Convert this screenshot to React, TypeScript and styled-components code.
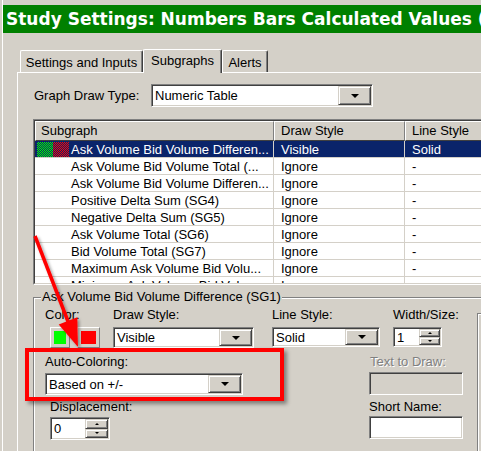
import React from "react";
import styled, { createGlobalStyle } from "styled-components";

const GlobalStyle = createGlobalStyle`
  html, body { margin: 0; padding: 0; background: #d4d0c8; }
  body {
    font-family: "Liberation Sans", Arial, sans-serif;
    font-size: 13px;
    color: #000;
  }
`;

const Screen = styled.div`
  position: relative;
  width: 481px;
  height: 451px;
  overflow: hidden;
  background: #d4d0c8;
`;

const Window = styled.div`
  box-sizing: border-box;
  width: 640px;
  height: 100%;
  margin-left: 2px;
  padding-top: 5px;
  border-left: 1px solid #fff;
`;

const TitleBar = styled.div`
  height: 28px;
  background: #008000;
  color: #fff;
  font-family: "DejaVu Sans", Verdana, sans-serif;
  font-weight: bold;
  font-size: 17px;
  line-height: 28px;
  padding-left: 3px;
  white-space: nowrap;
  overflow: hidden;
`;

const TabRow = styled.div`
  display: flex;
  align-items: flex-end;
  height: 24px;
  margin-top: 15px;
  margin-left: 17px;
`;

const Tab = styled.div<{ $active?: boolean; $w: number }>`
  position: relative;
  z-index: ${(p) => (p.$active ? 1 : 0)};
  box-sizing: border-box;
  width: ${(p) => p.$w}px;
  height: ${(p) => (p.$active ? 24 : 22)}px;
  margin-bottom: ${(p) => (p.$active ? -1 : 0)}px;
  padding-top: ${(p) => (p.$active ? 1 : 2)}px;
  line-height: 20px;
  text-align: center;
  white-space: nowrap;
  background: #d4d0c8;
  border-top: 1px solid #fff;
  border-left: 1px solid #fff;
  border-right: 1px solid #404040;
  box-shadow: inset -1px 0 #808080;
  border-top-left-radius: 2px;
  border-top-right-radius: 2px;
`;

const Panel = styled.div`
  margin-left: 14px;
  height: 400px;
  border-left: 1px solid #fff;
  border-top: 1px solid #fff;
  padding-left: 15px;
  padding-top: 11px;
`;

const DrawTypeRow = styled.div`
  display: flex;
  align-items: center;
  height: 23px;
`;

const RowLabel = styled.div<{ $w: number }>`
  width: ${(p) => p.$w}px;
  padding-left: 1px;
  box-sizing: border-box;
  white-space: nowrap;
`;

const Sunken = styled.div<{ $w: number; $h: number; $disabled?: boolean }>`
  box-sizing: border-box;
  display: flex;
  flex: none;
  width: ${(p) => p.$w}px;
  height: ${(p) => p.$h}px;
  padding: 1px;
  border: 1px solid;
  border-color: #808080 #fff #fff #808080;
  box-shadow: inset 1px 1px #404040, inset -1px -1px #d4d0c8;
  background: ${(p) => (p.$disabled ? "#d4d0c8" : "#fff")};
`;

const FieldText = styled.div`
  flex: 1;
  min-width: 0;
  display: flex;
  align-items: center;
  padding-left: 2px;
  white-space: nowrap;
  overflow: hidden;
`;

const RaisedButton = styled.div<{ $w: number }>`
  box-sizing: border-box;
  width: ${(p) => p.$w}px;
  flex: none;
  display: flex;
  align-items: center;
  justify-content: center;
  background: #d4d0c8;
  border: 1px solid;
  border-color: #d4d0c8 #404040 #404040 #d4d0c8;
  box-shadow: inset 1px 1px #fff, inset -1px -1px #808080;
`;

const DownArrow = styled.span`
  width: 0;
  height: 0;
  border-left: 4px solid transparent;
  border-right: 4px solid transparent;
  border-top: 4px solid #000;
`;

const SpinColumn = styled.div`
  display: flex;
  flex-direction: column;
  flex: none;
`;

const SpinButton = styled(RaisedButton)`
  flex: 1;
`;

const TinyArrow = styled.span<{ $up?: boolean }>`
  width: 0;
  height: 0;
  border-left: 2px solid transparent;
  border-right: 2px solid transparent;
  ${(p) => (p.$up ? "border-bottom: 2px solid #000;" : "border-top: 2px solid #000;")}
`;

const TableOuter = styled.div`
  margin-top: 12px;
  width: 600px;
  border: 1px solid;
  border-color: #808080 #fff #fff #808080;
`;

const TableInner = styled.div`
  height: 162px;
  overflow: hidden;
  border: 1px solid;
  border-color: #404040 #d4d0c8 #d4d0c8 #404040;
  background: #fff;
`;

const GridRow = styled.div`
  display: grid;
  grid-template-columns: 239px 131px 1fr;
`;

const HeaderCell = styled.div<{ $pl: number }>`
  box-sizing: border-box;
  height: 20px;
  line-height: 18px;
  padding-left: ${(p) => p.$pl}px;
  background: #d4d0c8;
  border-top: 1px solid #fff;
  border-left: 1px solid #fff;
  border-right: 1px solid #808080;
  border-bottom: 1px solid #404040;
  white-space: nowrap;
`;

const DataRow = styled(GridRow)<{ $selected?: boolean }>`
  background: ${(p) => (p.$selected ? "#0a246a" : "#fff")};
  color: ${(p) => (p.$selected ? "#fff" : "#000")};
`;

const Cell = styled.div<{ $pl: number }>`
  box-sizing: border-box;
  display: flex;
  align-items: center;
  height: 17px;
  padding-left: ${(p) => p.$pl}px;
  border-right: 1px solid #d4d0c8;
  border-bottom: 1px solid #d4d0c8;
  white-space: nowrap;
  overflow: hidden;
`;

const Swatches = styled.div`
  display: flex;
  width: 32px;
  height: 15px;
  margin-right: 2px;
  flex: none;
`;

const Swatch = styled.div<{ $color: string }>`
  flex: 1;
  background-image: repeating-conic-gradient(${(p) => p.$color} 0 25%, #0a246a 0 50%);
  background-size: 2px 2px;
`;

const GroupBox = styled.div`
  position: relative;
  margin-top: 12px;
  height: 300px;
  border: 1px solid #808080;
  box-shadow: inset 1px 1px #fff, 1px 1px #fff;
  padding-left: 11px;
  padding-top: 9px;
  display: flex;
`;

const Legend = styled.div`
  position: absolute;
  top: -9px;
  left: 7px;
  height: 16px;
  line-height: 16px;
  padding: 0 1px;
  background: #d4d0c8;
  white-space: nowrap;
`;

const MainColumn = styled.div`
  width: 432px;
  flex: none;
  display: flex;
  flex-direction: column;
`;

const SideFrame = styled.div`
  margin-top: 6px;
  width: 40px;
  height: 200px;
  border: 1px solid #808080;
  box-shadow: inset 1px 1px #fff;
`;

const FieldRow = styled.div<{ $mt?: number }>`
  display: flex;
  align-items: flex-start;
  margin-top: ${(p) => p.$mt ?? 0}px;
`;

const Field = styled.div<{ $w?: number; $ml?: number; $mt?: number }>`
  display: flex;
  flex-direction: column;
  flex: none;
  ${(p) => (p.$w ? `width: ${p.$w}px;` : "")}
  margin-left: ${(p) => p.$ml ?? 0}px;
  margin-top: ${(p) => p.$mt ?? 0}px;
`;

const Label = styled.div<{ $mb?: number; $disabled?: boolean; $pl?: number }>`
  height: 16px;
  line-height: 16px;
  white-space: nowrap;
  margin-bottom: ${(p) => p.$mb ?? 4}px;
  padding-left: ${(p) => p.$pl ?? 0}px;
  color: ${(p) => (p.$disabled ? "#808080" : "#000")};
  text-shadow: ${(p) => (p.$disabled ? "1px 1px 0 #fff" : "none")};
`;

const ColorButtons = styled.div`
  display: flex;
  gap: 7px;
  margin-left: 5px;
`;

const ColorButton = styled.div<{ $w: number }>`
  box-sizing: border-box;
  width: ${(p) => p.$w}px;
  height: 21px;
  padding: 3px;
  background: #d4d0c8;
  border: 1px solid;
  border-color: #fff #808080 #808080 #fff;
`;

const ColorFill = styled.div<{ $color: string }>`
  width: 100%;
  height: 100%;
  background: ${(p) => p.$color};
`;

const Overlay = styled.svg`
  position: absolute;
  left: 0;
  top: 0;
  width: 481px;
  height: 451px;
  pointer-events: none;
`;

const Highlight = styled.div`
  position: absolute;
  left: 25px;
  top: 348px;
  width: 259px;
  height: 53px;
  box-sizing: border-box;
  border: 4px solid #ff0000;
  box-shadow: 3px 3px 4px rgba(0, 0, 0, 0.4);
  pointer-events: none;
`;

type ComboProps = { w: number; h: number; value: string };
const Combo = ({ w, h, value }: ComboProps) => (
  <Sunken $w={w} $h={h}>
    <FieldText>{value}</FieldText>
    <RaisedButton $w={33}>
      <DownArrow />
    </RaisedButton>
  </Sunken>
);

type SpinProps = { w: number; h: number; value: string; bw: number };
const Spin = ({ w, h, value, bw }: SpinProps) => (
  <Sunken $w={w} $h={h}>
    <FieldText>{value}</FieldText>
    <SpinColumn>
      <SpinButton $w={bw}>
        <TinyArrow $up />
      </SpinButton>
      <SpinButton $w={bw}>
        <TinyArrow />
      </SpinButton>
    </SpinColumn>
  </Sunken>
);

const rows = [
  { name: "Ask Volume Bid Volume Differen...", draw: "Visible", line: "Solid", selected: true },
  { name: "Ask Volume Bid Volume Total (...", draw: "Ignore", line: "-" },
  { name: "Ask Volume Bid Volume Differen...", draw: "Ignore", line: "-" },
  { name: "Positive Delta Sum (SG4)", draw: "Ignore", line: "-" },
  { name: "Negative Delta Sum (SG5)", draw: "Ignore", line: "-" },
  { name: "Ask Volume Total (SG6)", draw: "Ignore", line: "-" },
  { name: "Bid Volume Total (SG7)", draw: "Ignore", line: "-" },
  { name: "Maximum Ask Volume Bid Volu...", draw: "Ignore", line: "-" },
  { name: "Minimum Ask Volume Bid Volu...", draw: "Ignore", line: "-" },
];

export default function App() {
  return (
    <Screen>
      <GlobalStyle />
      <Window>
        <TitleBar>Study Settings: Numbers Bars Calculated Values (SG1)</TitleBar>
        <TabRow>
          <Tab $w={123}>Settings and Inputs</Tab>
          <Tab $w={79} $active>
            Subgraphs
          </Tab>
          <Tab $w={46}>Alerts</Tab>
        </TabRow>
        <Panel>
          <DrawTypeRow>
            <RowLabel $w={118}>Graph Draw Type:</RowLabel>
            <Combo w={222} h={23} value="Numeric Table" />
          </DrawTypeRow>

          <TableOuter>
            <TableInner>
              <GridRow>
                <HeaderCell $pl={5}>Subgraph</HeaderCell>
                <HeaderCell $pl={6}>Draw Style</HeaderCell>
                <HeaderCell $pl={6}>Line Style</HeaderCell>
              </GridRow>
              {rows.map((r, i) => (
                <DataRow key={i} $selected={r.selected}>
                  <Cell $pl={2}>
                    <Swatches>
                      {r.selected && (
                        <>
                          <Swatch $color="#00ff00" />
                          <Swatch $color="#ff0000" />
                        </>
                      )}
                    </Swatches>
                    {r.name}
                  </Cell>
                  <Cell $pl={7}>{r.draw}</Cell>
                  <Cell $pl={7}>{r.line}</Cell>
                </DataRow>
              ))}
            </TableInner>
          </TableOuter>

          <GroupBox>
            <Legend>Ask Volume Bid Volume Difference (SG1)</Legend>
            <MainColumn>
              <FieldRow>
                <Field $w={68}>
                  <Label>Color:</Label>
                  <ColorButtons>
                    <ColorButton $w={20}>
                      <ColorFill $color="#00ff00" />
                    </ColorButton>
                    <ColorButton $w={23}>
                      <ColorFill $color="#ff0000" />
                    </ColorButton>
                  </ColorButtons>
                </Field>
                <Field $w={159}>
                  <Label>Draw Style:</Label>
                  <Combo w={141} h={21} value="Visible" />
                </Field>
                <Field $w={121}>
                  <Label>Line Style:</Label>
                  <Combo w={108} h={20} value="Solid" />
                </Field>
                <Field>
                  <Label>Width/Size:</Label>
                  <Spin w={49} h={20} value="1" bw={21} />
                </Field>
              </FieldRow>
              <FieldRow $mt={6}>
                <Field $w={324}>
                  <Label $mb={3}>Auto-Coloring:</Label>
                  <Combo w={198} h={22} value="Based on +/-" />
                  <Field $ml={5} $mt={4}>
                    <Label $mb={2}>Displacement:</Label>
                    <Spin w={60} h={23} value="0" bw={23} />
                  </Field>
                </Field>
                <Field>
                  <Label $mb={2} $disabled $pl={1}>
                    Text to Draw:
                  </Label>
                  <Sunken $w={94} $h={23} $disabled />
                  <Field $mt={4}>
                    <Label $mb={1}>Short Name:</Label>
                    <Sunken $w={94} $h={23} />
                  </Field>
                </Field>
              </FieldRow>
            </MainColumn>
            <SideFrame />
          </GroupBox>
        </Panel>
      </Window>

      <Overlay viewBox="0 0 481 451">
        <defs>
          <filter id="arrowShadow" x="-50%" y="-50%" width="200%" height="200%">
            <feDropShadow dx="2" dy="2" stdDeviation="1.5" floodColor="#000" floodOpacity="0.35" />
          </filter>
        </defs>
        <g filter="url(#arrowShadow)">
          <line x1="35" y1="236" x2="69" y2="324" stroke="#ff0000" strokeWidth="3.5" />
          <polygon points="78,347 58.7,324.4 77.3,317.2" fill="#ff0000" />
        </g>
      </Overlay>
      <Highlight />
    </Screen>
  );
}
